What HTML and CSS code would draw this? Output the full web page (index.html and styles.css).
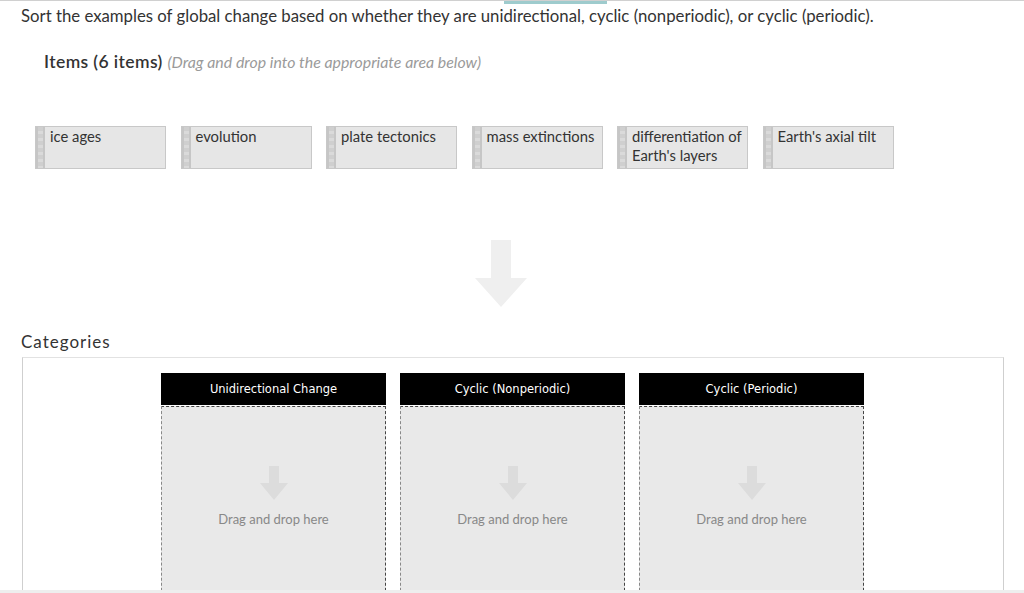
FILE: index.html
```html
<!DOCTYPE html>
<html>
<head>
<meta charset="utf-8">
<link rel="stylesheet" href="styles.css">
</head>
<body>
<div class="topbar"><div class="topbar-tab"></div></div>
<div class="page">
  <p class="prompt">Sort the examples of global change based on whether they are unidirectional, cyclic (nonperiodic), or cyclic (periodic).</p>
  <h2 class="items-title">Items (6 items) <span class="hint">(Drag and drop into the appropriate area below)</span></h2>
  <div class="cards">
    <div class="card"><span class="grip"></span><span class="card-text">ice ages</span></div>
    <div class="card"><span class="grip"></span><span class="card-text">evolution</span></div>
    <div class="card"><span class="grip"></span><span class="card-text">plate tectonics</span></div>
    <div class="card"><span class="grip"></span><span class="card-text">mass extinctions</span></div>
    <div class="card"><span class="grip"></span><span class="card-text">differentiation of Earth's layers</span></div>
    <div class="card"><span class="grip"></span><span class="card-text">Earth's axial tilt</span></div>
  </div>
  <div class="big-arrow">
    <svg width="52" height="67" viewBox="0 0 52 67"><path d="M16 0H36V38H52L26 67L0 38H16Z" fill="#efefef"/></svg>
  </div>
  <h2 class="cat-title">Categories</h2>
  <div class="cat-box">
    <div class="cat-cols">
      <div class="cat-col">
        <div class="cat-head">Unidirectional Change</div>
        <div class="drop">
          <svg width="28" height="34" viewBox="0 0 28 34"><path d="M9 0H19V17H28L14 34L0 17H9Z" fill="#dcdcdc"/></svg>
          <span class="drop-text">Drag and drop here</span>
        </div>
      </div>
      <div class="cat-col">
        <div class="cat-head">Cyclic (Nonperiodic)</div>
        <div class="drop">
          <svg width="28" height="34" viewBox="0 0 28 34"><path d="M9 0H19V17H28L14 34L0 17H9Z" fill="#dcdcdc"/></svg>
          <span class="drop-text">Drag and drop here</span>
        </div>
      </div>
      <div class="cat-col">
        <div class="cat-head">Cyclic (Periodic)</div>
        <div class="drop">
          <svg width="28" height="34" viewBox="0 0 28 34"><path d="M9 0H19V17H28L14 34L0 17H9Z" fill="#dcdcdc"/></svg>
          <span class="drop-text">Drag and drop here</span>
        </div>
      </div>
    </div>
  </div>
</div>
<div class="bottombar"></div>
</body>
</html>
```

FILE: styles.css
```css
html, body {
  margin: 0;
  padding: 0;
  background: #fff;
  overflow: hidden;
}
body {
  font-family: Lato, "Open Sans", sans-serif;
  color: #333;
}
.topbar {
  height: 3px;
  border-top: 1px solid #d0d0d0;
  display: flex;
  padding-left: 504px;
}
.topbar-tab {
  width: 103px;
  background: #9ecbcd;
}
.page {
  padding: 0 20px 0 21px;
}
.prompt {
  margin: 1px 0 0 0;
  font-size: 16.75px;
  line-height: 22px;
  color: #333;
}
.items-title {
  margin: 24px 0 0 23px;
  font-size: 17.5px;
  font-weight: 600;
  line-height: 22px;
  color: #333;
  letter-spacing: 0.4px;
}
.hint {
  font-size: 15.9px;
  font-weight: 400;
  font-style: italic;
  color: #9a9a9a;
  letter-spacing: 0;
}
.cards {
  display: flex;
  gap: 14.5px;
  margin: 53px 0 0 14px;
}
.card {
  width: 131px;
  height: 43px;
  box-sizing: border-box;
  background: #e6e6e6;
  border: 1px solid #c8c8c8;
  display: flex;
}
.grip {
  flex: 0 0 9px;
  background:
    repeating-linear-gradient(to bottom, #cfcfcf 0 4px, #dadada 4px 7px) 2px 0 / 5px 100% no-repeat,
    #c6c6c6;
}
.card-text {
  padding: 0 4px 0 5px;
  font-size: 14.8px;
  line-height: 19px;
  color: #333;
}
.big-arrow {
  display: flex;
  justify-content: center;
  margin: 71px 0 0 -24px;
  height: 67px;
}
.cat-title {
  margin: 24px 0 0 0;
  font-size: 17px;
  font-weight: 400;
  line-height: 22px;
  letter-spacing: 1px;
  color: #333;
}
.cat-box {
  margin: 4px 0 0 1px;
  border: 1px solid #cfcfcf;
  border-top-color: #e2e2e2;
  height: 300px;
  padding-top: 15px;
}
.cat-cols {
  display: flex;
  justify-content: center;
  gap: 14px;
  margin-left: -1px;
}
.cat-col {
  width: 225px;
}
.cat-head {
  background: #000;
  color: #fff;
  height: 32px;
  line-height: 32px;
  text-align: center;
  font-family: "DejaVu Sans", sans-serif;
  font-size: 11.5px;
}
.drop {
  margin-top: 1px;
  height: 200px;
  box-sizing: border-box;
  border: 1px dashed #444;
  border-left-color: #888;
  background: #e9e9e9;
  display: flex;
  flex-direction: column;
  align-items: center;
  padding-top: 59px;
}
.drop-text {
  margin-top: 11px;
  font-size: 13px;
  color: #888;
}
.bottombar {
  position: fixed;
  left: 0;
  right: 0;
  bottom: 0;
  height: 3px;
  background: #eeeeee;
}
```
